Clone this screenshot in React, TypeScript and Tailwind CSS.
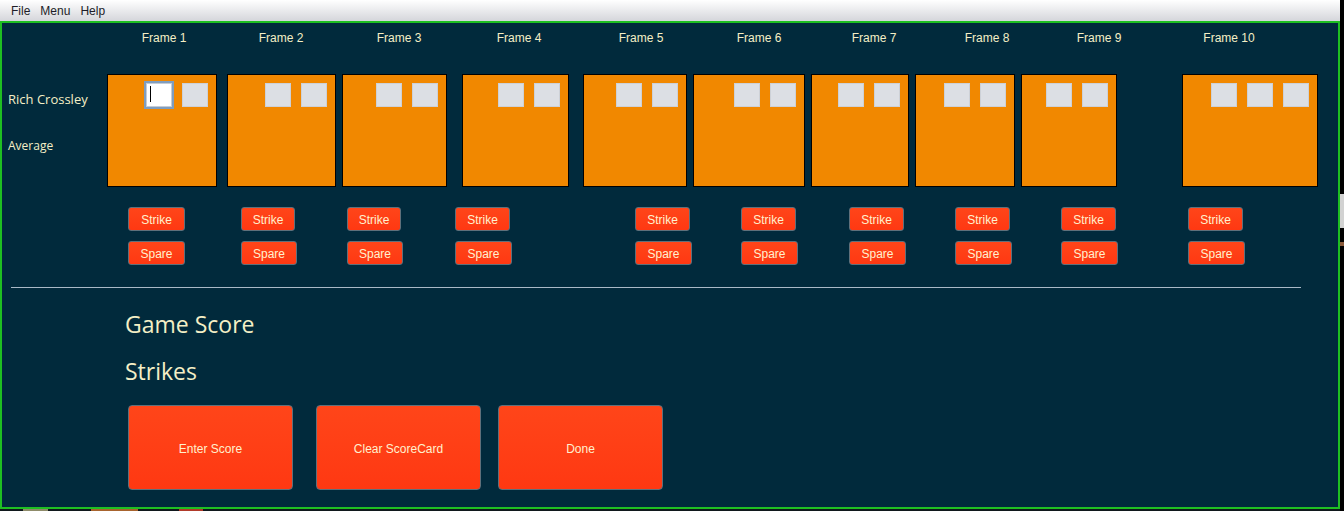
import React from 'react';

type Frame = {
  label: string;
  labelCls: string;
  boxCls: string;
  cells: number;
  btnCls: string;
  strikeCls: string;
  spareCls: string;
};

const frames: Frame[] = [
  { label: 'Frame 1', labelCls: 'ml-[132px]', boxCls: 'w-[110px]', cells: 2, btnCls: 'ml-[126px] w-[57px]', strikeCls: 'w-[57px]', spareCls: 'w-[57px]' },
  { label: 'Frame 2', labelCls: 'ml-[57px]', boxCls: 'ml-[10px] w-[109px]', cells: 2, btnCls: 'ml-[56px] w-[56px]', strikeCls: 'w-[54px]', spareCls: 'w-[56px]' },
  { label: 'Frame 3', labelCls: 'ml-[58px]', boxCls: 'ml-[6px] w-[105px]', cells: 2, btnCls: 'ml-[50px] w-[56px]', strikeCls: 'w-[54px]', spareCls: 'w-[56px]' },
  { label: 'Frame 4', labelCls: 'ml-[60px]', boxCls: 'ml-[15px] w-[107px]', cells: 2, btnCls: 'ml-[52px] w-[57px]', strikeCls: 'w-[55px]', spareCls: 'w-[57px]' },
  { label: 'Frame 5', labelCls: 'ml-[62px]', boxCls: 'ml-[14px] w-[104px]', cells: 2, btnCls: 'ml-[123px] w-[57px]', strikeCls: 'w-[55px]', spareCls: 'w-[57px]' },
  { label: 'Frame 6', labelCls: 'ml-[58px]', boxCls: 'ml-[6px] w-[112px]', cells: 2, btnCls: 'ml-[49px] w-[57px]', strikeCls: 'w-[55px]', spareCls: 'w-[57px]' },
  { label: 'Frame 7', labelCls: 'ml-[55px]', boxCls: 'ml-[6px] w-[98px]', cells: 2, btnCls: 'ml-[51px] w-[57px]', strikeCls: 'w-[55px]', spareCls: 'w-[57px]' },
  { label: 'Frame 8', labelCls: 'ml-[53px]', boxCls: 'ml-[6px] w-[100px]', cells: 2, btnCls: 'ml-[49px] w-[57px]', strikeCls: 'w-[55px]', spareCls: 'w-[57px]' },
  { label: 'Frame 9', labelCls: 'ml-[52px]', boxCls: 'ml-[6px] w-[96px]', cells: 2, btnCls: 'ml-[49px] w-[57px]', strikeCls: 'w-[55px]', spareCls: 'w-[57px]' },
  { label: 'Frame 10', labelCls: 'ml-[70px]', boxCls: 'ml-[65px] w-[136px]', cells: 3, btnCls: 'ml-[70px] w-[57px]', strikeCls: 'w-[55px]', spareCls: 'w-[57px]' },
];

const sans = "font-['Liberation_Sans',Arial,sans-serif]";
const humanist = "font-['Open_Sans','Noto_Sans',sans-serif]";

function SmallButton({ text, cls }: { text: string; cls: string }) {
  return (
    <button
      className={`${cls} h-[24px] rounded-[3px] border border-[#5f707b] bg-gradient-to-b from-[#ff4519] to-[#ff3812] pt-[2px] text-[12px] leading-none text-[#fff1cf] ${sans}`}
    >
      {text}
    </button>
  );
}

function BigButton({ text, cls }: { text: string; cls: string }) {
  return (
    <button
      className={`${cls} h-[85px] w-[165px] rounded-[4px] border border-[#5f707b] bg-gradient-to-b from-[#ff4519] to-[#ff3812] pt-[2px] text-[12px] leading-none text-[#fff1cf] ${sans}`}
    >
      {text}
    </button>
  );
}

function Cell({ focused }: { focused?: boolean }) {
  if (focused) {
    return (
      <div className="h-[24px] w-[26px] border border-[#c4ccd6] bg-white pl-[3px] pt-[2px] shadow-[0_0_0_2px_#7f9dbf]">
        <div className="h-[16px] w-px bg-black" />
      </div>
    );
  }
  return <div className="h-[24px] w-[26px] border border-[#cdd1d7] bg-[#dcdfe4]" />;
}

export default function App() {
  return (
    <div className="flex h-[511px] w-[1344px] overflow-hidden bg-black">
      <div className="flex w-[1340px] flex-col">
        {/* menu bar */}
        <div className={`flex h-[21px] items-center gap-[10px] bg-gradient-to-b from-[#ffffff] to-[#d5d6db] pl-[11px] text-[12px] text-[#1d1d28] ${sans}`}>
          <span>File</span>
          <span>Menu</span>
          <span>Help</span>
        </div>

        {/* main panel */}
        <div className="flex h-[488px] flex-col border-2 border-[#1fbf22] bg-[#012a3c]">
          {/* frame labels */}
          <div className={`flex pt-[8px] text-[12px] leading-[14px] text-[#f4efc6] ${sans}`}>
            {frames.map((f) => (
              <div key={f.label} className={`${f.labelCls} w-[60px] text-center`}>
                {f.label}
              </div>
            ))}
          </div>

          {/* score boxes */}
          <div className="mt-[29px] flex h-[113px]">
            <div className={`flex w-[105px] flex-col pl-[6px] text-[#f4efc6] ${humanist}`}>
              <div className="mt-[16px] text-[13px] leading-[18px]">Rich Crossley</div>
              <div className="mt-[30px] text-[12px] leading-[16px]">Average</div>
            </div>
            {frames.map((f, i) => (
              <div
                key={f.label}
                className={`${f.boxCls} flex items-start justify-end gap-[10px] border border-black bg-[#f18800] pr-[8px] pt-[8px]`}
              >
                {Array.from({ length: f.cells }).map((_, j) => (
                  <Cell key={j} focused={i === 0 && j === 0} />
                ))}
              </div>
            ))}
          </div>

          {/* strike / spare */}
          <div className="mt-[20px] flex">
            {frames.map((f) => (
              <div key={f.label} className={`${f.btnCls} flex flex-col gap-[10px]`}>
                <SmallButton text="Strike" cls={f.strikeCls} />
                <SmallButton text="Spare" cls={f.spareCls} />
              </div>
            ))}
          </div>

          <div className="ml-[9px] mt-[22px] h-px w-[1290px] bg-[#a9b9c7]" />

          <div className={`ml-[123px] mt-[20px] text-[23px] leading-[32px] text-[#f4efc6] ${humanist}`}>Game Score</div>
          <div className={`ml-[123px] mt-[15px] text-[23px] leading-[32px] text-[#f4efc6] ${humanist}`}>Strikes</div>

          <div className="mt-[18px] flex">
            <BigButton text="Enter Score" cls="ml-[126px]" />
            <BigButton text="Clear ScoreCard" cls="ml-[23px]" />
            <BigButton text="Done" cls="ml-[17px]" />
          </div>
        </div>

        {/* taskbar sliver */}
        <div className="flex h-[2px] bg-[#10181c]">
          <div className="ml-[23px] w-[25px] bg-[#8f8c6a]" />
          <div className="ml-[43px] w-[47px] bg-[#a8642e]" />
          <div className="ml-[41px] w-[24px] bg-[#b13a2a]" />
        </div>
      </div>

      {/* right edge */}
      <div className="flex w-[4px] flex-col">
        <div className="mt-[194px] h-[34px] bg-[#d2d2d2]" />
        <div className="mt-[14px] h-[4px] bg-[#8a5a3a]" />
      </div>
    </div>
  );
}
